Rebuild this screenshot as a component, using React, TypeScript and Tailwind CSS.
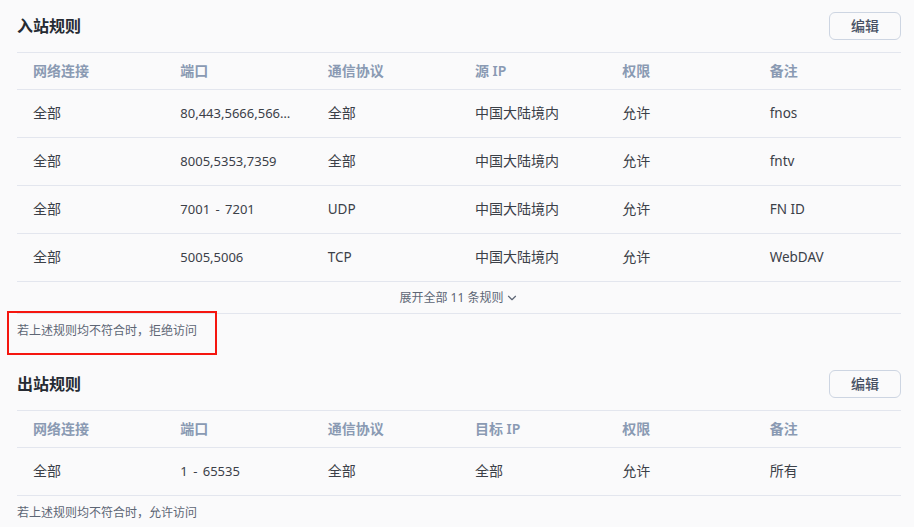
import { ChevronDown } from 'lucide-react';

const FONT = 'font-["Noto_Sans","Noto_Sans_CJK_SC",sans-serif]';

interface Rule {
  network: string;
  port: string;
  protocol: string;
  ip: string;
  access: string;
  note: string;
}

const INBOUND: Rule[] = [
  { network: '全部', port: '80,443,5666,5667,8000', protocol: '全部', ip: '中国大陆境内', access: '允许', note: 'fnos' },
  { network: '全部', port: '8005,5353,7359', protocol: '全部', ip: '中国大陆境内', access: '允许', note: 'fntv' },
  { network: '全部', port: '7001 - 7201', protocol: 'UDP', ip: '中国大陆境内', access: '允许', note: 'FN ID' },
  { network: '全部', port: '5005,5006', protocol: 'TCP', ip: '中国大陆境内', access: '允许', note: 'WebDAV' },
];

const OUTBOUND: Rule[] = [
  { network: '全部', port: '1 - 65535', protocol: '全部', ip: '全部', access: '允许', note: '所有' },
];

function SectionHeader({ title }: { title: string }) {
  return (
    <div className="flex h-[52px] items-center justify-between">
      <h2 className="pb-[1px] text-[16px] font-semibold text-[#262b33]">{title}</h2>
      <button className="flex h-[28px] w-[72px] items-center justify-center rounded-md border border-[#cdd5e2] pb-[1px] text-[14px] font-medium text-[#475063]">
        编辑
      </button>
    </div>
  );
}

function RuleTable({ ipLabel, rules }: { ipLabel: string; rules: Rule[] }) {
  const headers = ['网络连接', '端口', '通信协议', ipLabel, '权限', '备注'];
  return (
    <div className="border-t border-[#e3e6ee]">
      <div className="grid h-[37px] grid-cols-6 items-center border-b border-[#e3e6ee] pb-[2px] text-[14px] font-semibold text-[#8a9ab3]">
        {headers.map(h => (
          <div key={h} className="px-4">
            {h}
          </div>
        ))}
      </div>
      {rules.map(r => (
        <div
          key={r.note}
          className="grid h-[48px] grid-cols-6 items-center border-b border-[#e3e6ee] pb-[2px] text-[14px] text-[#3b4048]"
        >
          <div className="px-4">{r.network}</div>
          {/* latin text sits a bit narrower than the 14px CJK in the reference */}
          <div className="truncate px-4 pt-[2px] text-[13px] [word-spacing:2px]">{r.port}</div>
          <div className={r.protocol === '全部' ? 'px-4' : 'px-4 pt-[2px] text-[13.5px]'}>{r.protocol}</div>
          <div className="px-4">{r.ip}</div>
          <div className="px-4">{r.access}</div>
          <div className={r.note === '所有' ? 'px-4' : 'px-4 pt-[2px] text-[13.5px]'}>{r.note}</div>
        </div>
      ))}
    </div>
  );
}

export default function App() {
  return (
    <div className={`${FONT} h-[527px] w-[914px] overflow-hidden bg-[#fafafb] pl-[17px] pr-[13px]`}>
      <SectionHeader title="入站规则" />
      <RuleTable ipLabel="源 IP" rules={INBOUND} />
      <div className="flex h-[32px] items-center justify-center border-b border-[#e3e6ee] pl-[1px] text-[12px] text-[#5d6675]">
        展开全部 11 条规则
        <ChevronDown className="ml-[2px] h-[14px] w-[14px]" strokeWidth={2} />
      </div>

      <div className="relative flex h-[34px] items-center text-[12px] text-[#5d6675]">
        若上述规则均不符合时，拒绝访问
        <div className="absolute left-[-10px] top-[-3px] h-[44px] w-[210px] border-2 border-[#f5160f]" />
      </div>

      <div className="mt-[10px]">
        <SectionHeader title="出站规则" />
        <RuleTable ipLabel="目标 IP" rules={OUTBOUND} />
        <div className="flex h-[34px] items-center text-[12px] text-[#5d6675]">若上述规则均不符合时，允许访问</div>
      </div>
    </div>
  );
}
